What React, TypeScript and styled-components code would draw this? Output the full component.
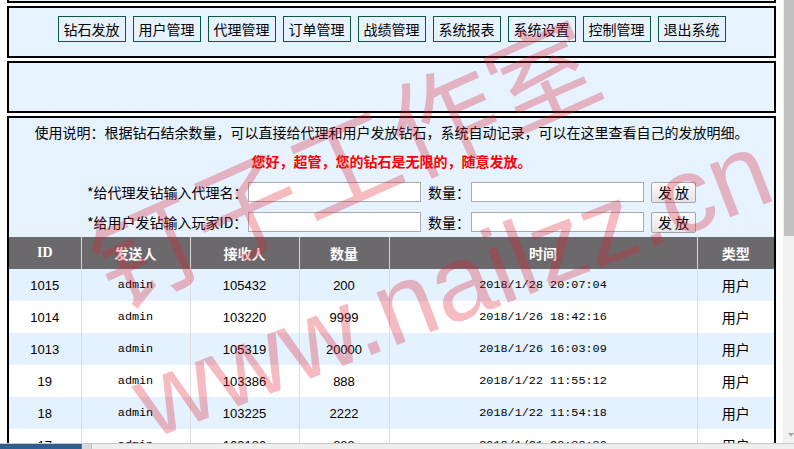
import styled, { createGlobalStyle } from 'styled-components';

const GlobalStyle = createGlobalStyle`
  html, body {
    margin: 0;
    padding: 0;
    background: #fff;
  }
  body {
    font-family: "Noto Sans CJK SC", "Liberation Sans", sans-serif;
    font-size: 14px;
    color: #000;
  }
`;

const Page = styled.div`
  position: relative;
  width: 794px;
  height: 449px;
  overflow: hidden;
  display: flex;
  flex-direction: column;
`;

const Frame = styled.div`
  flex: 1;
  display: flex;
  min-height: 0;
`;

const Content = styled.div`
  width: 783px;
  overflow: hidden;
`;

const Panel = styled.div`
  margin: 3px 7px 0;
  border: 2px solid #000;
  background: #e6f2ff;
  box-sizing: border-box;
`;

const CutPanel = styled(Panel)`
  margin-top: 0;
  border-top: none;
  height: 3px;
`;

const NavPanel = styled(Panel)`
  height: 52px;
  padding-top: 8px;
  display: flex;
  justify-content: center;
  align-items: flex-start;
  gap: 7px;
`;

const EmptyPanel = styled(Panel)`
  height: 52px;
`;

const NavButton = styled.button`
  height: 26px;
  padding: 0 5px;
  border: 1px solid #0b5a3c;
  background: transparent;
  font: 14px/24px "Noto Sans CJK SC", sans-serif;
  color: #000;
  cursor: pointer;
`;

const Intro = styled.div`
  text-align: center;
  line-height: 28px;
`;

const Notice = styled.div`
  text-align: center;
  line-height: 31px;
  color: #ff0000;
  font-weight: bold;
`;

const FormRow = styled.div`
  height: 30px;
  display: flex;
  justify-content: center;
  align-items: center;
`;

const Label = styled.span<{ $w: number }>`
  width: ${(p) => p.$w}px;
  text-align: left;
  white-space: nowrap;
  font-family: "Noto Sans CJK SC", sans-serif;
`;

const Input = styled.input`
  width: 173px;
  height: 20px;
  box-sizing: border-box;
  border: 1px solid #a9a9a9;
  background: #fff;
  padding: 0 3px;
  margin: 0 7px 0 0;
`;

const SendButton = styled.button`
  width: 45px;
  height: 21px;
  padding: 0;
  border: 1px solid #a6a6a6;
  border-radius: 2px;
  background: linear-gradient(#fbfbfb, #e4e4e4);
  font: 14px/19px "Noto Sans CJK SC", sans-serif;
  color: #000;
  white-space: pre;
`;

const Table = styled.table`
  width: 100%;
  border-collapse: collapse;
  table-layout: fixed;
`;

const Col = styled.col<{ $w: number }>`
  width: ${(p) => p.$w}px;
`;

const Th = styled.th`
  height: 32px;
  padding: 0;
  background: #6c696c;
  color: #fff;
  font: bold 14px "Liberation Serif", "Noto Sans CJK SC", serif;
  border-left: 1px solid #d6d6d6;
  &:first-child {
    border-left: none;
  }
`;

const Tr = styled.tr<{ $alt: boolean }>`
  background: ${(p) => (p.$alt ? '#e4f1fe' : '#ffffff')};
`;

const Td = styled.td<{ $mono?: boolean; $cjk?: boolean }>`
  height: 32px;
  padding: 0;
  text-align: center;
  border-left: 1px solid #dcdcdc;
  font-family: ${(p) =>
    p.$mono
      ? '"Liberation Mono", monospace'
      : p.$cjk
        ? '"Noto Sans CJK SC", sans-serif'
        : '"Liberation Sans", sans-serif'};
  font-size: ${(p) => (p.$mono ? '11.8px' : p.$cjk ? '14px' : '13px')};
  &:first-child {
    border-left: none;
  }
`;

const VScroll = styled.div`
  width: 11px;
  background: #f0f0f0;
  display: flex;
  flex-direction: column;
  padding-left: 1px;
  box-sizing: border-box;
`;

const Thumb = styled.div`
  height: 236px;
  background: #c1c1c1;
`;

const Spacer = styled.div`
  flex: 1;
`;

const ArrowBox = styled.div`
  height: 17px;
  display: flex;
  align-items: center;
  padding-left: 4px;
`;

const BottomBar = styled.div`
  height: 6px;
  display: flex;
  background: #eeeeee;
  border-top: 1px solid #c9c9c9;
  box-sizing: border-box;
`;

const TaskBlock = styled.div`
  width: 81px;
  background: #2e5e91;
  border-right: 1px solid #3b9a45;
`;

const GrayBlock = styled.div`
  width: 9px;
  background: #d9d9d9;
  border-right: 1px solid #c2c2c2;
`;

const Watermark = styled.div`
  position: absolute;
  inset: 0;
  pointer-events: none;
  overflow: hidden;
`;

const Mark = styled.span<{ $x: number; $y: number; $size: number; $rot: number; $cjk?: boolean }>`
  position: absolute;
  left: ${(p) => p.$x}px;
  top: ${(p) => p.$y}px;
  transform: translate(-50%, -50%) rotate(${(p) => p.$rot}deg);
  font-size: ${(p) => p.$size}px;
  font-family: ${(p) => (p.$cjk ? '"Noto Sans CJK SC", sans-serif' : '"Liberation Sans", sans-serif')};
  line-height: 1;
  white-space: nowrap;
  color: rgba(222, 30, 45, 0.3);
`;

const navItems = ['钻石发放', '用户管理', '代理管理', '订单管理', '战绩管理', '系统报表', '系统设置', '控制管理', '退出系统'];

const columns = [
  { title: 'ID', w: 72 },
  { title: '发送人', w: 109 },
  { title: '接收人', w: 109 },
  { title: '数量', w: 90 },
  { title: '时间', w: 308 },
  { title: '类型', w: 77 },
];

const records = [
  { id: '1015', from: 'admin', to: '105432', amount: '200', time: '2018/1/28 20:07:04', kind: '用户' },
  { id: '1014', from: 'admin', to: '103220', amount: '9999', time: '2018/1/26 18:42:16', kind: '用户' },
  { id: '1013', from: 'admin', to: '105319', amount: '20000', time: '2018/1/26 16:03:09', kind: '用户' },
  { id: '19', from: 'admin', to: '103386', amount: '888', time: '2018/1/22 11:55:12', kind: '用户' },
  { id: '18', from: 'admin', to: '103225', amount: '2222', time: '2018/1/22 11:54:18', kind: '用户' },
  { id: '17', from: 'admin', to: '103180', amount: '888', time: '2018/1/21 20:38:30', kind: '用户' },
];

const App = () => {
  return (
    <Page>
      <GlobalStyle />
      <Frame>
        <Content>
          <CutPanel />
          <NavPanel>
            {navItems.map((item) => (
              <NavButton key={item}>{item}</NavButton>
            ))}
          </NavPanel>
          <EmptyPanel />
          <Panel>
            <Intro>使用说明：根据钻石结余数量，可以直接给代理和用户发放钻石，系统自动记录，可以在这里查看自己的发放明细。</Intro>
            <Notice>您好，超管，您的钻石是无限的，随意发放。</Notice>
            <FormRow>
              <Label $w={161}>*给代理发钻输入代理名：</Label>
              <Input type="text" />
              <Label $w={43}>数量：</Label>
              <Input type="text" />
              <SendButton>发 放</SendButton>
            </FormRow>
            <FormRow>
              <Label $w={161}>*给用户发钻输入玩家ID：</Label>
              <Input type="text" />
              <Label $w={43}>数量：</Label>
              <Input type="text" />
              <SendButton>发 放</SendButton>
            </FormRow>
            <Table>
              <colgroup>
                {columns.map((c) => (
                  <Col key={c.title} $w={c.w} />
                ))}
              </colgroup>
              <thead>
                <tr>
                  {columns.map((c) => (
                    <Th key={c.title}>{c.title}</Th>
                  ))}
                </tr>
              </thead>
              <tbody>
                {records.map((r, i) => (
                  <Tr key={r.id} $alt={i % 2 === 0}>
                    <Td>{r.id}</Td>
                    <Td $mono>{r.from}</Td>
                    <Td>{r.to}</Td>
                    <Td>{r.amount}</Td>
                    <Td $mono>{r.time}</Td>
                    <Td $cjk>{r.kind}</Td>
                  </Tr>
                ))}
              </tbody>
            </Table>
          </Panel>
        </Content>
        <VScroll>
          <Thumb />
          <Spacer />
          <ArrowBox>
            <svg width="6" height="4" viewBox="0 0 6 4">
              <path d="M0 0 L6 0 L3 3.5 Z" fill="#a3a3a3" />
            </svg>
          </ArrowBox>
        </VScroll>
      </Frame>
      <BottomBar>
        <TaskBlock />
        <GrayBlock />
      </BottomBar>
      <Watermark>
        <Mark $x={342} $y={158} $size={108} $rot={-24} $cjk>
          钉子工作室
        </Mark>
        <Mark $x={452} $y={285} $size={107} $rot={-21}>
          www.nailzz.cn
        </Mark>
      </Watermark>
    </Page>
  );
};

export default App;
